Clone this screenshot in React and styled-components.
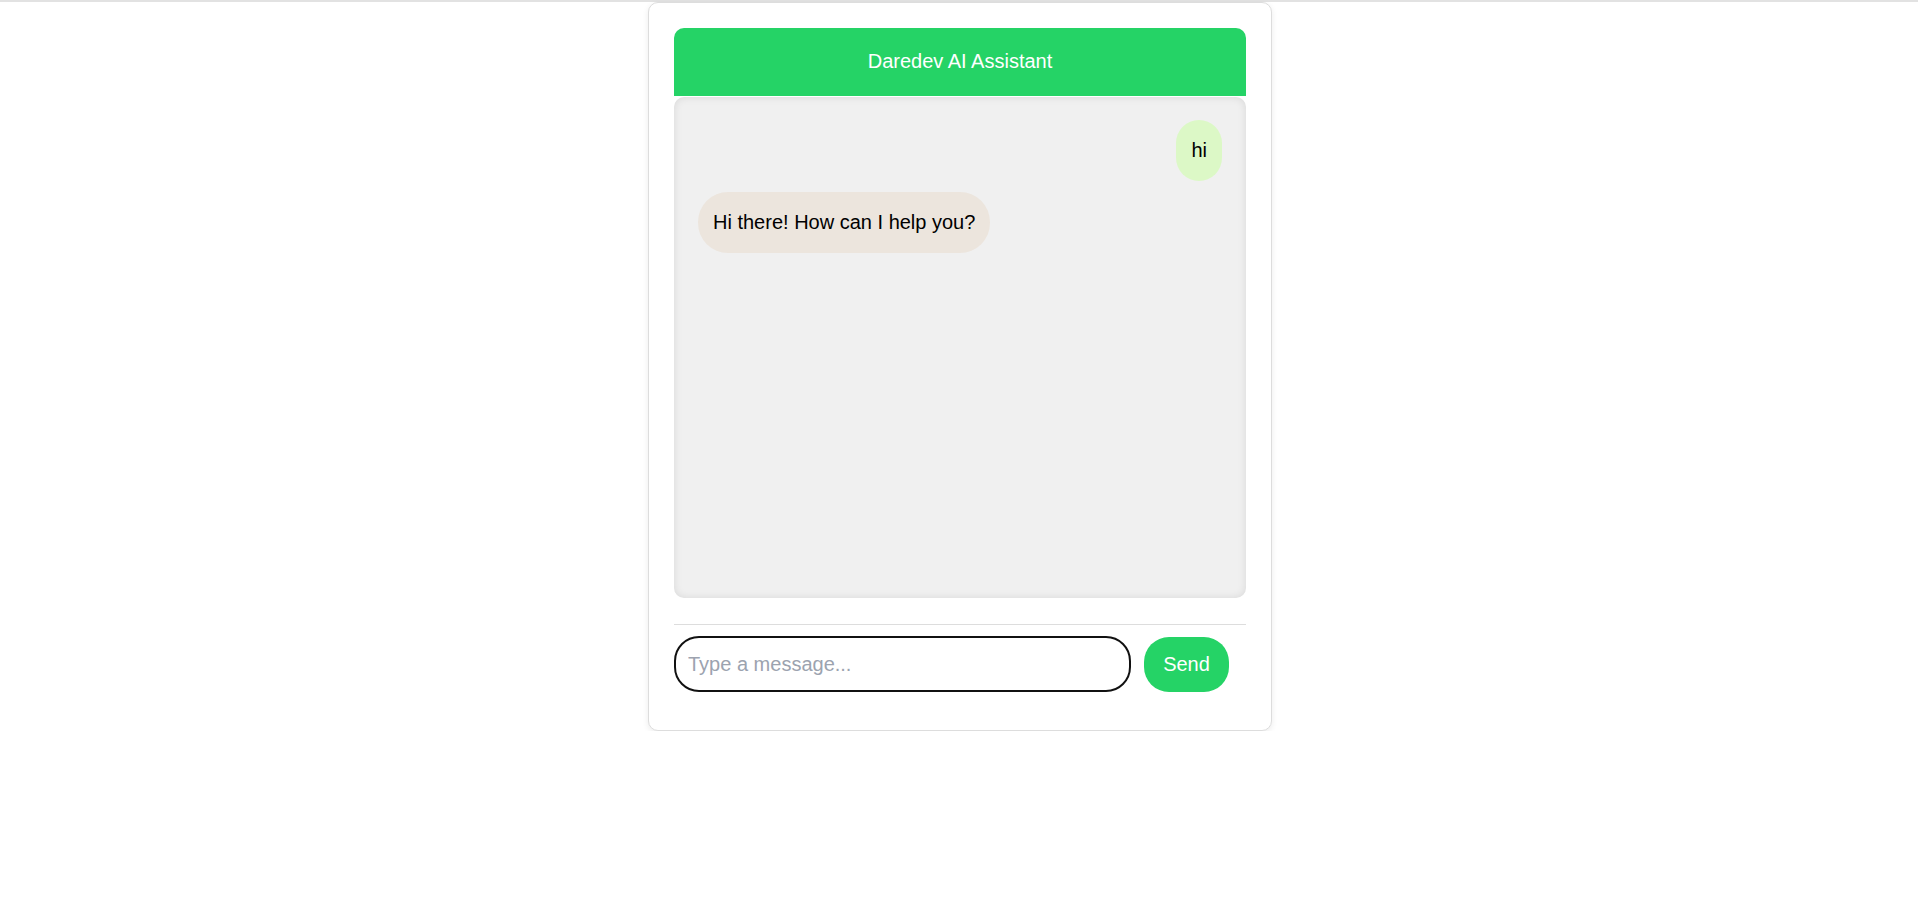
import React, { useState } from 'react';
import styled, { createGlobalStyle } from 'styled-components';

const GlobalStyle = createGlobalStyle`
	html, body {
		margin: 0;
		padding: 0;
		background: #ffffff;
		font-family: 'Liberation Sans', Arial, sans-serif;
	}
`;

const initialMessages = [
	{ id: 1, from: 'user', text: 'hi' },
	{ id: 2, from: 'bot', text: 'Hi there! How can I help you?' },
];

const App = () => {
	const [messages] = useState(initialMessages);
	const [draft, setDraft] = useState('');

	return (
		<>
			<GlobalStyle />
			<TopRule />
			<Page>
				<Card>
					<Header>Daredev AI Assistant</Header>
					<ChatArea>
						{messages.map((m) => (
							<Bubble key={m.id} $user={m.from === 'user'}>
								{m.text}
							</Bubble>
						))}
					</ChatArea>
					<InputRow>
						<MessageInput
							type='text'
							placeholder='Type a message...'
							value={draft}
							onChange={(e) => setDraft(e.target.value)}
						/>
						<SendButton>Send</SendButton>
					</InputRow>
				</Card>
			</Page>
		</>
	);
};

export default App;

const TopRule = styled.div`
	height: 2px;
	background: #e2e2e2;
`;

const Page = styled.main`
	display: flex;
	justify-content: center;
	padding-left: 2px;
`;

const Card = styled.section`
	display: flex;
	flex-direction: column;
	width: 572px;
	padding: 25px 25px 38px;
	background: #ffffff;
	border: 1px solid #dddddd;
	border-radius: 10px;
	box-shadow: 0 2px 6px rgba(0, 0, 0, 0.08);
`;

const Header = styled.header`
	padding: 22px 0 23px;
	background: #25d366;
	color: #ffffff;
	font-size: 20px;
	line-height: 23px;
	text-align: center;
	border-radius: 10px 10px 0 0;
`;

const ChatArea = styled.div`
	display: flex;
	flex-direction: column;
	gap: 11px;
	height: 501px;
	margin-top: 1px;
	padding: 23px 24px;
	box-sizing: border-box;
	background: #f0f0f0;
	border-radius: 10px;
	box-shadow: inset 0 0 8px rgba(0, 0, 0, 0.1);
	overflow-y: auto;
`;

const Bubble = styled.div`
	align-self: ${(p) => (p.$user ? 'flex-end' : 'flex-start')};
	padding: 19px 15px;
	background: ${(p) => (p.$user ? '#dcf8c6' : '#ece5dd')};
	color: #000000;
	font-size: 20px;
	line-height: 23px;
	border-radius: 30px;
`;

const InputRow = styled.div`
	display: flex;
	align-items: center;
	gap: 13px;
	margin-top: 26px;
	padding-top: 11px;
	border-top: 1px solid #dddddd;
`;

const MessageInput = styled.input`
	width: 457px;
	height: 56px;
	box-sizing: border-box;
	padding: 0 12px;
	border: 2px solid #111111;
	border-radius: 25px;
	font-family: 'Liberation Sans', Arial, sans-serif;
	font-size: 20px;
	color: #111111;
	outline: none;

	&::placeholder {
		color: #9ca3af;
	}
`;

const SendButton = styled.button`
	width: 85px;
	height: 55px;
	border: none;
	border-radius: 25px;
	background: #25d366;
	color: #ffffff;
	font-family: 'Liberation Sans', Arial, sans-serif;
	font-size: 20px;
	cursor: pointer;
`;
